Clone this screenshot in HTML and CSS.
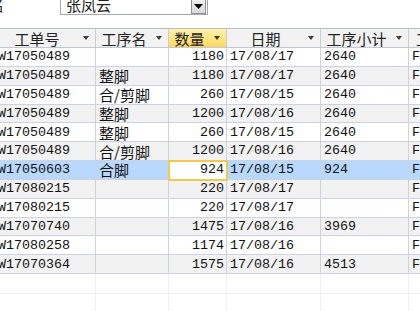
FILE: index.html
```html
<!DOCTYPE html>
<html>
<head>
<meta charset="utf-8">
<title>工序明细</title>
<link rel="stylesheet" href="styles.css">
</head>
<body>
<div class="filter">
  <span class="label">名</span>
  <div class="combo">
    <span class="combo-text">张凤云</span>
    <span class="combo-btn"><svg width="9" height="5" viewBox="0 0 9 5"><polygon points="0,0 9,0 4.5,5" fill="#000"/></svg></span>
  </div>
</div>

<div class="sheet">
  <div class="row head">
    <div class="hcell"><span>工单号</span><i class="arrow"></i></div>
    <div class="hcell"><span>工序名</span><i class="arrow"></i></div>
    <div class="hcell current"><span>数量</span><i class="arrow"></i></div>
    <div class="hcell"><span>日期</span><i class="arrow"></i></div>
    <div class="hcell"><span>工序小计</span><i class="arrow"></i></div>
    <div class="hcell last"><span>工序</span></div>
  </div>

  <div class="row"><div class="cell">W17050489</div><div class="cell cn"></div><div class="cell num">1180</div><div class="cell">17/08/17</div><div class="cell">2640</div><div class="cell">F</div></div>
  <div class="row"><div class="cell">W17050489</div><div class="cell cn">整脚</div><div class="cell num">1180</div><div class="cell">17/08/17</div><div class="cell">2640</div><div class="cell">F</div></div>
  <div class="row"><div class="cell">W17050489</div><div class="cell cn">合/剪脚</div><div class="cell num">260</div><div class="cell">17/08/15</div><div class="cell">2640</div><div class="cell">F</div></div>
  <div class="row"><div class="cell">W17050489</div><div class="cell cn">整脚</div><div class="cell num">1200</div><div class="cell">17/08/16</div><div class="cell">2640</div><div class="cell">F</div></div>
  <div class="row"><div class="cell">W17050489</div><div class="cell cn">整脚</div><div class="cell num">260</div><div class="cell">17/08/15</div><div class="cell">2640</div><div class="cell">F</div></div>
  <div class="row"><div class="cell">W17050489</div><div class="cell cn">合/剪脚</div><div class="cell num">1200</div><div class="cell">17/08/16</div><div class="cell">2640</div><div class="cell">F</div></div>
  <div class="row selected"><div class="cell">W17050603</div><div class="cell cn">合脚</div><div class="cell num active">924</div><div class="cell">17/08/15</div><div class="cell">924</div><div class="cell">F</div></div>
  <div class="row"><div class="cell">W17080215</div><div class="cell cn"></div><div class="cell num">220</div><div class="cell">17/08/17</div><div class="cell"></div><div class="cell">F</div></div>
  <div class="row"><div class="cell">W17080215</div><div class="cell cn"></div><div class="cell num">220</div><div class="cell">17/08/17</div><div class="cell"></div><div class="cell">F</div></div>
  <div class="row"><div class="cell">W17070740</div><div class="cell cn"></div><div class="cell num">1475</div><div class="cell">17/08/16</div><div class="cell">3969</div><div class="cell">F</div></div>
  <div class="row"><div class="cell">W17080258</div><div class="cell cn"></div><div class="cell num">1174</div><div class="cell">17/08/16</div><div class="cell"></div><div class="cell">F</div></div>
  <div class="row"><div class="cell">W17070364</div><div class="cell cn"></div><div class="cell num">1575</div><div class="cell">17/08/16</div><div class="cell">4513</div><div class="cell">F</div></div>

  <div class="row blank"><div class="cell"></div><div class="cell"></div><div class="cell"></div><div class="cell"></div><div class="cell"></div><div class="cell"></div></div>
  <div class="row blank"><div class="cell"></div><div class="cell"></div><div class="cell"></div><div class="cell"></div><div class="cell"></div><div class="cell"></div></div>
</div>
</body>
</html>
```

FILE: styles.css
```css
html, body { margin: 0; padding: 0; height: 100%; overflow: hidden; background: #fff; }
body { font: 13.33px/1 "Liberation Mono", "Noto Sans CJK SC", monospace; color: #111; }

.filter { display: flex; align-items: flex-start; height: 28px; }
.filter .label { margin-left: -11px; width: 15px; margin-top: -3px; font: 15px/15px "Noto Sans CJK SC", sans-serif; color: #222; }
.combo { display: flex; align-items: center; box-sizing: border-box; margin: -6px 0 0 56px; width: 148px; height: 21px; border: 1px solid #a3a8b0; background: #fff; }
.combo-text { flex: 1; padding-left: 5px; font: 15px/19px "Noto Sans CJK SC", sans-serif; color: #222; }
.combo-btn { display: flex; align-items: center; justify-content: center; box-sizing: border-box; width: 15px; height: 19px; margin-right: 1px; padding-top: 4px; border: 1px solid #8f9194; background: linear-gradient(#f6f6f6, #d9d9d9); }

.sheet { margin-left: -5px; }
.row { display: grid; grid-template-columns: 101px 73px 58px 94px 88px 80px; box-sizing: border-box; height: 18.85px; }
.row:nth-child(odd) { background: #f2f2f2; }
.row.selected { background: #b8d9fd; }
.row.blank { height: 20px; background: #fff; }

.head { height: 20px; background: #dde1e7; border-top: 1px solid #b9bec6; border-bottom: 1px solid #c3c9d2; }
.hcell { display: flex; align-items: center; border-right: 1px solid #c8cdd5; font: 15px/1 "Noto Sans CJK SC", sans-serif; color: #222; }
.hcell span { flex: 1; text-align: center; }
.hcell .arrow { width: 16px; height: 4px; background: no-repeat center / 7px 4px linear-gradient(to bottom right, transparent 0, transparent 0); position: relative; }
.hcell .arrow::before { content: ""; position: absolute; left: 4px; top: 0; border-style: solid; border-width: 4px 3.5px 0 3.5px; border-color: #3c3c3c transparent transparent transparent; }
.hcell.current { background: linear-gradient(#fff3ad, #ffd75f); }
.hcell.last span { text-align: left; padding-left: 7px; }

.cell { display: flex; align-items: center; overflow: hidden; white-space: nowrap; padding: 0 3px; border-right: 1px solid #c9d3e4; border-bottom: 1px solid #c9d3e4; }
.cell.cn { font: 15px/1 "Noto Sans CJK SC", sans-serif; }
.cell.num { justify-content: flex-end; padding-right: 2px; }
.cell.active { background: #fff; outline: 2px solid #f4c84a; outline-offset: -1px; }
.blank .cell { border-color: #eef0f4; }
```
